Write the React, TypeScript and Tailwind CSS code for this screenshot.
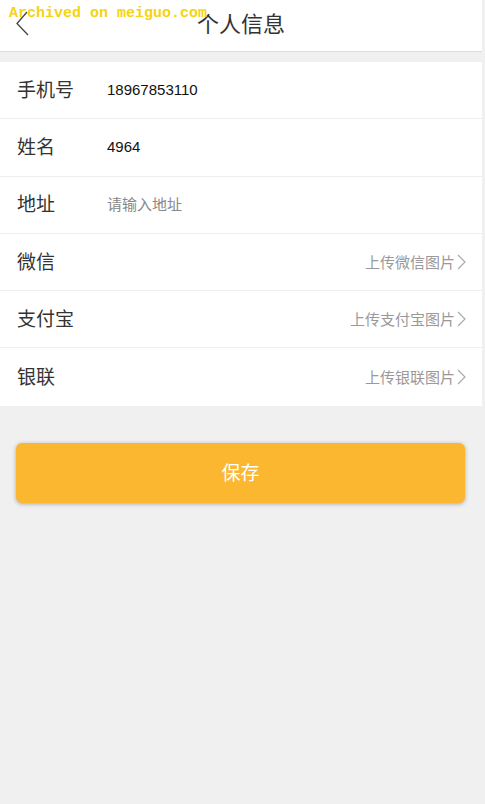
import React from "react";

const font = { fontFamily: '"Microsoft YaHei", "Noto Sans CJK SC", "Liberation Sans", sans-serif' };

function Chevron() {
  return (
    <svg width="9" height="16" viewBox="0 0 9 16" className="ml-[2px]">
      <path d="M1 1 L8 8 L1 15" fill="none" stroke="#aaa" strokeWidth="1.2" />
    </svg>
  );
}

const rows: { label: string; value?: string; placeholder?: string; right?: string }[] = [
  { label: "手机号", value: "18967853110" },
  { label: "姓名", value: "4964" },
  { label: "地址", placeholder: "请输入地址" },
  { label: "微信", right: "上传微信图片" },
  { label: "支付宝", right: "上传支付宝图片" },
  { label: "银联", right: "上传银联图片" },
];

export default function App() {
  return (
    <div className="w-[485px] h-[804px] bg-[#f0f0f0] relative overflow-hidden" style={font}>
      <div className="w-[482px]">
        <div className="h-[52px] bg-white border-b border-[#dcdcdc] flex items-center justify-center relative">
          <svg width="14" height="26" viewBox="0 0 14 26" className="absolute left-[15px] top-[11px]">
            <path d="M12 1 L2 12.5 L13 24" fill="none" stroke="#444" strokeWidth="1.3" />
          </svg>
          <span className="text-[22px] text-[#333] leading-none -mt-[7px]">个人信息</span>
        </div>
        <div className="h-[10px]" />
        <div className="bg-white">
          {rows.map((r, i) => (
            <div
              key={r.label}
              className={`h-[57.3px] flex items-center pl-[17px] pr-[16px] ${i < rows.length - 1 ? "border-b border-[#eeeeee]" : ""}`}
            >
              <span className="w-[90px] text-[19px] text-[#333] -mt-[2px]">{r.label}</span>
              {r.value && (
                <span className="text-[15px] text-[#111]" style={{ fontFamily: '"Liberation Sans", Arial, sans-serif' }}>
                  {r.value}
                </span>
              )}
              {r.placeholder && <span className="text-[15px] text-[#888]">{r.placeholder}</span>}
              {r.right && (
                <span className="ml-auto flex items-center text-[15px] text-[#999]">
                  {r.right}
                  <Chevron />
                </span>
              )}
            </div>
          ))}
        </div>
        <div className="px-[16px] pt-[37px]">
          <div className="h-[60px] w-[449px] rounded-[6px] bg-[#fbb72f] shadow-[0_1px_4px_rgba(0,0,0,0.3)] flex items-center justify-center">
            <span className="text-[19px] text-white -mt-[2px]">保存</span>
          </div>
        </div>
      </div>
      <div
        className="absolute left-[9px] top-[5px] text-[15px] font-bold text-[#f5d40f] leading-[18px]"
        style={{ fontFamily: '"Liberation Mono", "DejaVu Sans Mono", monospace' }}
      >
        Archived on meiguo.com
      </div>
    </div>
  );
}
